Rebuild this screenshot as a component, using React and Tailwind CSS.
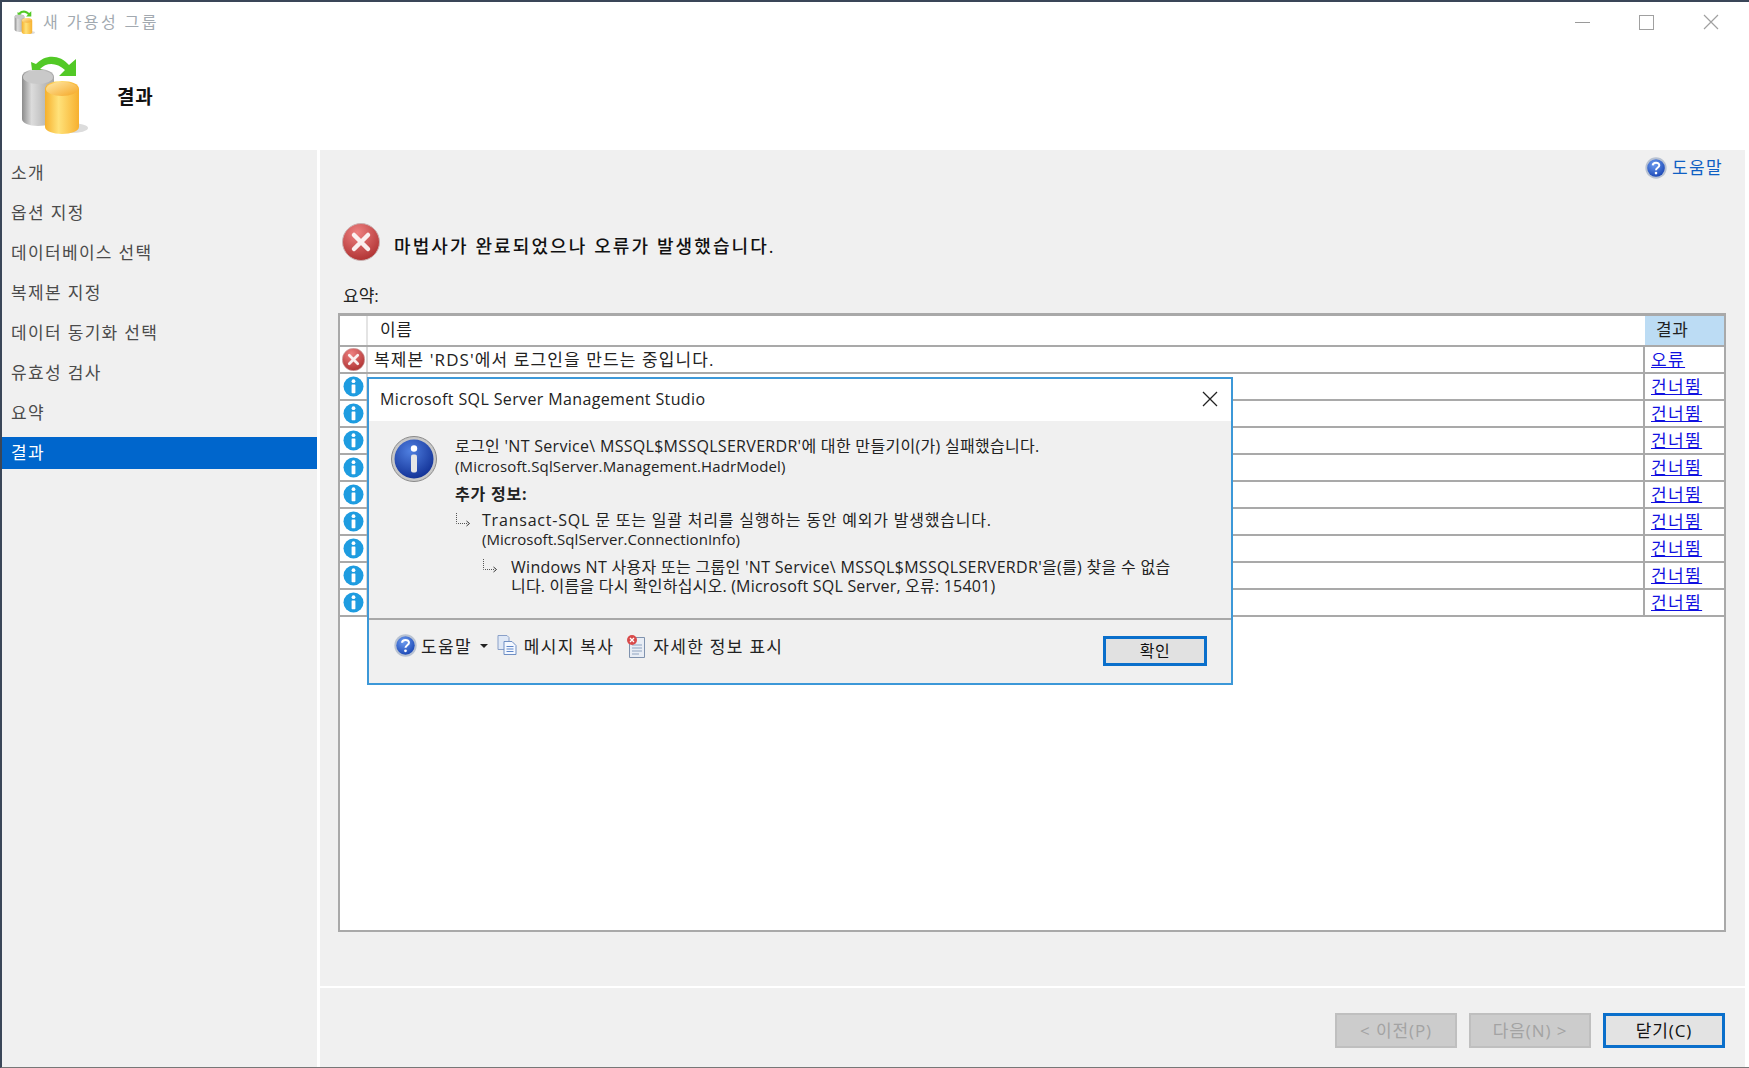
import React from 'react'

const FONT = { fontFamily: '"Open Sans", "Noto Sans CJK KR", sans-serif' }

const steps = ['소개', '옵션 지정', '데이터베이스 선택', '복제본 지정', '데이터 동기화 선택', '유효성 검사', '요약', '결과']

const DbIcon = ({ size = 68 }) => (
  <svg width={size} height={size * 1.18} viewBox="0 0 68 80">
    <defs>
      <linearGradient id="dbGray" x1="0" x2="1" y1="0" y2="0">
        <stop offset="0" stopColor="#8c8c8c" />
        <stop offset="0.3" stopColor="#dcdcdc" />
        <stop offset="1" stopColor="#a6a6a6" />
      </linearGradient>
      <linearGradient id="dbGold" x1="0" x2="1" y1="0" y2="0">
        <stop offset="0" stopColor="#f6b02c" />
        <stop offset="0.4" stopColor="#ffe27a" />
        <stop offset="1" stopColor="#f7b02e" />
      </linearGradient>
      <linearGradient id="dbTop" x1="0" x2="1" y1="0" y2="1">
        <stop offset="0" stopColor="#ffe9a8" />
        <stop offset="1" stopColor="#f5a623" />
      </linearGradient>
    </defs>
    <ellipse cx="50" cy="73" rx="18" ry="5" fill="#dcdcdc" />
    <path d="M2 22c0-5 7-8 16-8s16 3 16 8v42c0 4-7 7-16 7S2 68 2 64z" fill="url(#dbGray)" />
    <ellipse cx="18" cy="22" rx="15" ry="7" fill="#c9c9c9" />
    <path d="M25 34c0-5 7-8 17-8s17 3 17 8v38c0 4-8 7-17 7s-17-3-17-7z" fill="url(#dbGold)" />
    <ellipse cx="42" cy="34" rx="16" ry="7" fill="url(#dbTop)" />
    <path d="M12 15l-1-8 5 2C25-1 40-1 49 10l7-6v17H39l6-6C37 7 26 7 20 14l4 1z" fill="#52c926" />
  </svg>
)

const ErrorIcon = ({ size = 38, id = 'err' }) => (
  <svg width={size} height={size} viewBox="0 0 38 38">
    <defs>
      <radialGradient id={id} cx="0.4" cy="0.25" r="0.85">
        <stop offset="0" stopColor="#ee8080" />
        <stop offset="1" stopColor="#a92a2a" />
      </radialGradient>
    </defs>
    <circle cx="19" cy="19" r="18.5" fill={`url(#${id})`} stroke="#c9b0b0" />
    <path d="M12 12l14 14M26 12L12 26" stroke="#fff" strokeWidth="4.5" strokeLinecap="round" opacity="0.9" />
  </svg>
)

const InfoDot = () => (
  <svg width="21" height="21" viewBox="0 0 21 21">
    <circle cx="10.5" cy="10.5" r="10" fill="#1e9ce0" />
    <circle cx="10.5" cy="5.2" r="1.9" fill="#fff" />
    <rect x="8.6" y="8.4" width="3.8" height="8.8" rx="0.6" fill="#fff" />
  </svg>
)

const InfoBig = () => (
  <svg width="46" height="46" viewBox="0 0 46 46">
    <defs>
      <radialGradient id="infoBlue" cx="0.4" cy="0.3" r="0.8">
        <stop offset="0" stopColor="#4f7fe0" />
        <stop offset="1" stopColor="#0c2a8f" />
      </radialGradient>
    </defs>
    <circle cx="23" cy="23" r="22.5" fill="#c8c8c8" stroke="#8a8a8a" />
    <circle cx="23" cy="23" r="19.5" fill="url(#infoBlue)" />
    <circle cx="23" cy="12.5" r="3.2" fill="#fff" />
    <rect x="20" y="18.5" width="6" height="18" rx="2" fill="#e6e6e6" />
  </svg>
)

const HelpIcon = ({ size = 20, id = 'help' }) => (
  <svg width={size} height={size} viewBox="0 0 20 20">
    <defs>
      <radialGradient id={id} cx="0.4" cy="0.3" r="0.8">
        <stop offset="0" stopColor="#6d9cf0" />
        <stop offset="1" stopColor="#1440b0" />
      </radialGradient>
    </defs>
    <circle cx="10" cy="10" r="9.7" fill="#b8c2d2" />
    <circle cx="10" cy="10" r="8" fill={`url(#${id})`} />
    <path d="M7 7.6c.2-3.2 6-3.2 6 0 0 2.2-3 2.2-3 4.4" fill="none" stroke="#fff" strokeWidth="1.8" />
    <circle cx="10" cy="14.6" r="1.2" fill="#fff" />
  </svg>
)

const CopyIcon = () => (
  <svg width="22" height="22" viewBox="0 0 21 22">
    <path d="M1.5 1.5h9l2 2v12h-11z" fill="#dfe8f6" stroke="#8aa0c8" />
    <path d="M7.5 7.5h8l4 4v9h-12z" fill="#f4f8ff" stroke="#6f8fc4" />
    <path d="M10 12.5h7M10 15h7M10 17.5h7" stroke="#5e86c8" />
  </svg>
)

const DetailsIcon = () => (
  <svg width="21" height="24" viewBox="0 0 21 24">
    <path d="M3.5 3.5h15v20h-15z" fill="#e8edf5" stroke="#7f92ae" />
    <path d="M6 11h10M6 14h10M6 17h10M6 20h7" stroke="#8ea3c0" />
    <circle cx="6" cy="6" r="5" fill="#d84a4a" />
    <path d="M4 4l4 4M8 4l-4 4" stroke="#fff" strokeWidth="1.3" />
  </svg>
)

const DottedArrow = () => (
  <svg width="16" height="16" viewBox="0 0 16 16">
    <path d="M1.5 1v10.5H12" fill="none" stroke="#555" strokeDasharray="1 1" />
    <path d="M11.5 9l3 2.5-3 2.5" fill="none" stroke="#333" />
  </svg>
)

const Row = ({ icon, name, result }) => (
  <div className="flex h-[27px] border-b-2 border-[#a9a9a9]">
    <div className="w-[28px] flex items-center justify-center border-r-2 border-[#d8d8d8]">{icon}</div>
    <div className="flex-1 pl-[6px] text-[17px] tracking-[1.1px] leading-[26px] text-[#222]">{name}</div>
    <div className="w-[81px] border-l-2 border-[#a9a9a9] pl-[6px] text-[17px] tracking-[1.4px] leading-[25px] text-[#1010e0] underline">{result}</div>
  </div>
)

const WizButton = ({ children, primary }) =>
  primary ? (
    <div className="w-[122px] h-[35px] flex items-center justify-center border-[3px] border-[#0a6fcb] bg-[#e3e3e3] text-[17px] tracking-[0.9px] text-[#111]">{children}</div>
  ) : (
    <div className="w-[122px] h-[35px] flex items-center justify-center border-2 border-[#bfbfbf] bg-[#cccccc] text-[17px] tracking-[0.9px] text-[#a3a3a3]">{children}</div>
  )

export default function App() {
  return (
    <div className="relative w-[1749px] h-[1068px] overflow-hidden bg-white border-t-2 border-l-2 border-b border-t-[#3a4658] border-l-[#3a4658] border-b-[#777777]" style={FONT}>
      {/* title bar */}
      <div className="flex items-center h-[40px] pl-[12px] pr-[14px]">
        <DbIcon size={21} />
        <span className="ml-[8px] text-[16px] tracking-[2.4px] text-[#a2a9b0]">새 가용성 그룹</span>
        <div className="ml-auto flex items-center gap-[49px] pr-[16px]">
          <div className="w-[15px] h-[1px] bg-[#9a9a9a]" />
          <div className="w-[15px] h-[15px] border-[1.5px] border-[#a0a0a0]" />
          <svg width="16" height="16" viewBox="0 0 16 16"><path d="M1 1l14 14M15 1L1 15" stroke="#a0a0a0" strokeWidth="1.2" /></svg>
        </div>
      </div>

      {/* wizard header */}
      <div className="flex items-center h-[108px] pl-[18px]">
        <div className="mb-[2px]"><DbIcon /></div>
        <span className="ml-[29px] mt-[2px] text-[19px] tracking-[0.7px] font-bold text-[#111]">결과</span>
      </div>

      <div className="flex h-[918px]">
        {/* steps */}
        <div className="w-[315px] shrink-0 bg-[#f0f0f0] pt-[3px]">
          {steps.map((s, i) => (
            <div key={s} className="h-[40px] flex items-center">
              <div className={`w-full h-[32px] pl-[9px] flex items-center text-[17px] tracking-[1.33px] ${i === 7 ? 'bg-[#0066cc] text-white' : 'text-[#4b4b4b]'}`}>{s}</div>
            </div>
          ))}
        </div>

        {/* main */}
        <div className="w-[1425px] ml-[3px] bg-[#f0f0f0] flex flex-col">
          <div className="flex-1 pl-[18px] pr-[19px] flex flex-col">
            <div className="flex justify-end items-center h-[30px] mt-[3px] gap-[5px] pr-[3px] text-[17px] tracking-[1.4px] text-[#0f5fc4]">
              <HelpIcon size={22} id="helpTop" />
              <span>도움말</span>
            </div>
            <div className="flex items-center mt-[40px] gap-[14px] pl-[4px]">
              <ErrorIcon />
              <span className="pt-[8px] text-[18px] font-medium tracking-[2.1px] text-[#111]">마법사가 완료되었으나 오류가 발생했습니다.</span>
            </div>
            <div className="mt-[24px] pl-[5px] text-[17px] leading-[22px] text-[#222]">요약:</div>
            <div className="mt-[6px] h-[619px] bg-white border-2 border-[#a9a9a9] border-t-[3px]">
              <div className="flex h-[31px] border-b-2 border-[#a9a9a9]">
                <div className="w-[28px] border-r-2 border-[#e4e4e4]" />
                <div className="flex-1 pl-[12px] text-[17px] tracking-[0.6px] leading-[28px] text-[#222]">이름</div>
                <div className="w-[79px] bg-[#bcdcf4] pl-[11px] text-[17px] tracking-[0.6px] leading-[28px] text-[#222]">결과</div>
              </div>
              <Row icon={<ErrorIcon size={23} id="errRow" />} name="복제본 'RDS'에서 로그인을 만드는 중입니다." result="오류" />
              {Array.from({ length: 9 }).map((_, i) => (
                <Row key={i} icon={<InfoDot />} name="" result="건너뜀" />
              ))}
            </div>
          </div>
          <div className="h-[82px] border-t-2 border-white flex justify-end items-start gap-[12px] pt-[25px] pr-[20px]">
            <WizButton>&lt; 이전(P)</WizButton>
            <WizButton>다음(N) &gt;</WizButton>
            <WizButton primary>닫기(C)</WizButton>
          </div>
        </div>
      </div>

      {/* message box */}
      <div className="absolute left-[365px] top-[375px] w-[866px] h-[308px] border-2 border-[#3c98d8] bg-[#f0f0f0] flex flex-col">
        <div className="h-[42px] shrink-0 bg-white flex items-center justify-between pl-[11px] pr-[13px]">
          <span className="mb-[2px] text-[16px] tracking-[0.37px] text-[#222]">Microsoft SQL Server Management Studio</span>
          <svg className="mb-[2px]" width="16" height="16" viewBox="0 0 16 16"><path d="M1 1l14 14M15 1L1 15" stroke="#222" strokeWidth="1.3" /></svg>
        </div>
        <div className="flex-1 flex pl-[22px] pt-[15px] border-b-2 border-[#a8a8a8]">
          <div className="shrink-0 w-[64px]"><InfoBig /></div>
          <div className="text-[15px] leading-[20px] text-[#222]">
            <div className="text-[16px] tracking-[0.3px]">로그인 'NT Service\ MSSQL$MSSQLSERVERDR'에 대한 만들기이(가) 실패했습니다.</div>
            <div className="tracking-[0.15px]">(Microsoft.SqlServer.Management.HadrModel)</div>
            <div className="mt-[8px] text-[16px] tracking-[0.8px] font-bold">추가 정보:</div>
            <div className="flex mt-[6px]">
              <div className="w-[27px] pt-[2px] shrink-0"><DottedArrow /></div>
              <div>
                <div className="text-[16px] tracking-[0.8px]">Transact-SQL 문 또는 일괄 처리를 실행하는 동안 예외가 발생했습니다.</div>
                <div className="tracking-[0.05px] leading-[19px]">(Microsoft.SqlServer.ConnectionInfo)</div>
              </div>
            </div>
            <div className="flex mt-[9px] pl-[27px] leading-[19px]">
              <div className="w-[29px] shrink-0"><DottedArrow /></div>
              <div>
                <div className="text-[16px] tracking-[0.3px]">Windows NT 사용자 또는 그룹인 'NT Service\ MSSQL$MSSQLSERVERDR'을(를) 찾을 수 없습</div>
                <div className="text-[16px] tracking-[0.2px]">니다. 이름을 다시 확인하십시오. (Microsoft SQL Server, 오류: 15401)</div>
              </div>
            </div>
          </div>
        </div>
        <div className="h-[63px] shrink-0 flex items-start pl-[25px] pt-[14px] pr-[24px] text-[17px] tracking-[1.3px] text-[#222]">
          <HelpIcon size={23} id="helpBox" />
          <span className="ml-[4px]">도움말</span>
          <span className="ml-[8px] mt-[10px] w-0 h-0 border-x-[4px] border-x-transparent border-t-[4px] border-t-[#222]" />
          <span className="ml-[8px]"><CopyIcon /></span>
          <span className="ml-[6px]">메시지 복사</span>
          <span className="ml-[12px]"><DetailsIcon /></span>
          <span className="ml-[6px]">자세한 정보 표시</span>
          <div className="ml-auto mt-[2px] w-[104px] h-[30px] flex items-center justify-center border-[3px] border-[#0a6fcb] bg-[#e1e1e1] text-[16px] tracking-[0.6px] text-[#111]">확인</div>
        </div>
      </div>
    </div>
  )
}
